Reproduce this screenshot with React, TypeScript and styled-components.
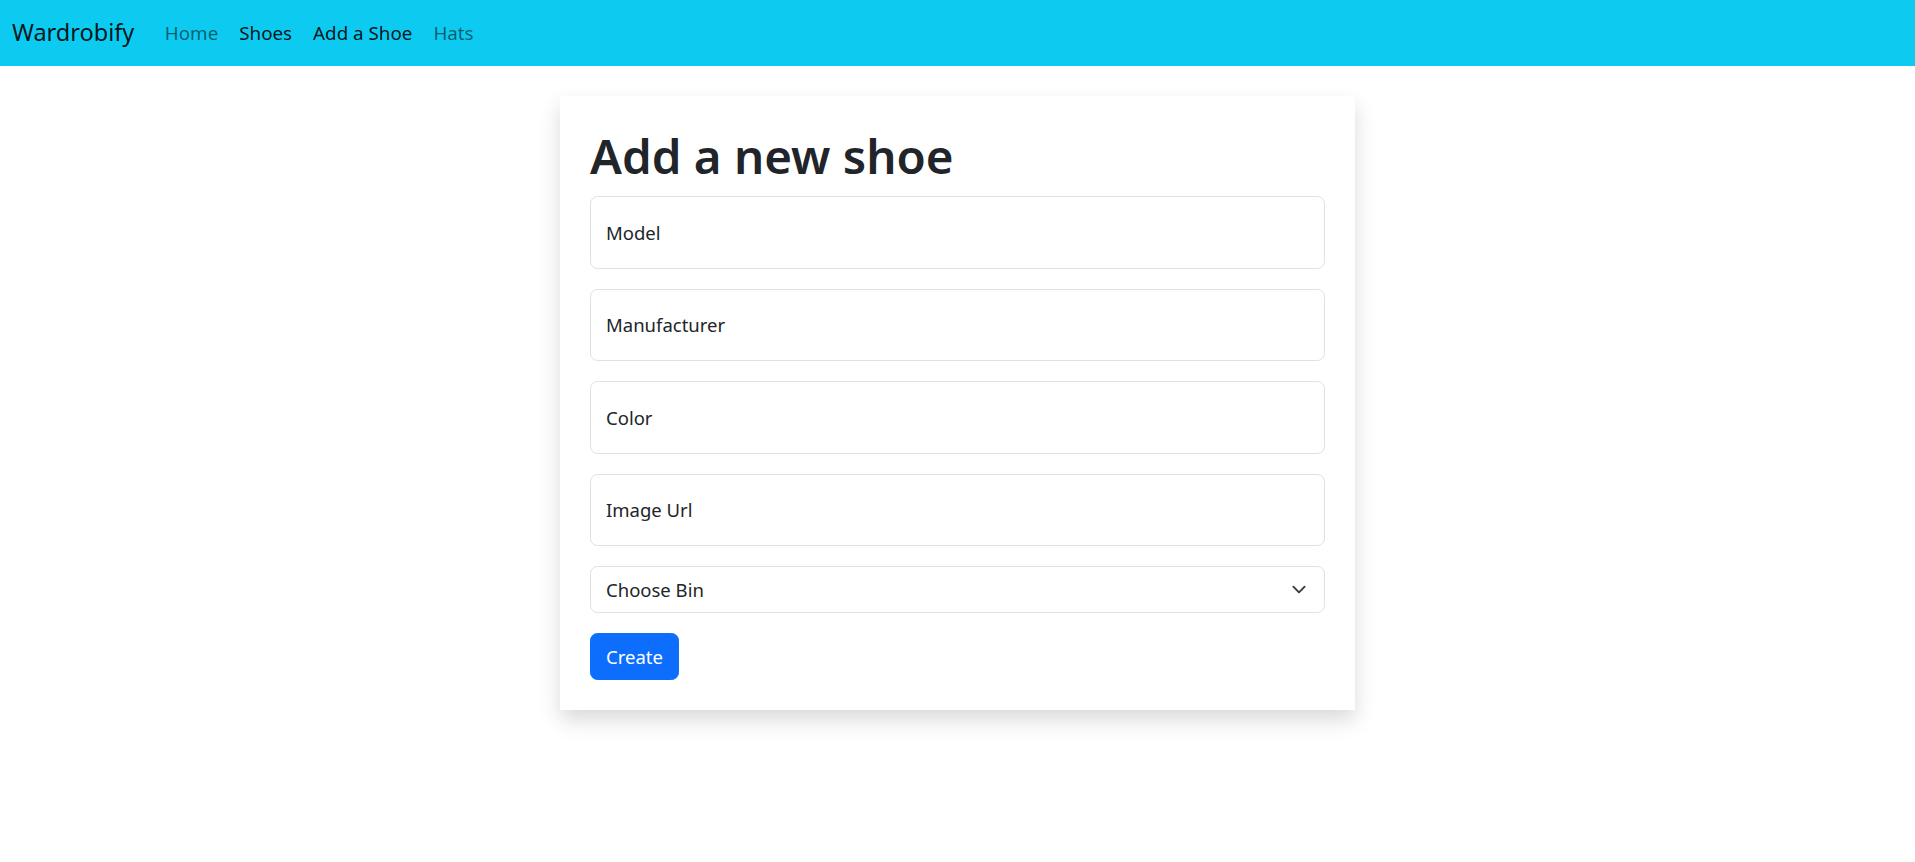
import React from "react";
import styled, { createGlobalStyle } from "styled-components";

const Global = createGlobalStyle`
  html, body { margin: 0; padding: 0; background: #fff; }
  body {
    font-family: "Noto Sans", "Open Sans", sans-serif;
    color: #212529;
    font-size: 18.5px;
  }
  * { box-sizing: border-box; }
`;

const NavBar = styled.nav`
  height: 66px;
  background: #0dcaf0;
  display: flex;
  align-items: center;
  padding: 0 12px;
`;

const Brand = styled.a`
  font-size: 23.5px;
  color: rgba(0, 0, 0, 0.9);
  text-decoration: none;
  margin-right: 20px;
  line-height: 1;
`;

const NavList = styled.ul`
  display: flex;
  list-style: none;
  margin: 0;
  padding: 0;
`;

const NavLink = styled.a<{ $active?: boolean }>`
  display: block;
  padding: 0 10.5px;
  font-size: 18.8px;
  text-decoration: none;
  color: ${(p) => (p.$active ? "rgba(0,0,0,0.9)" : "rgba(0,0,0,0.55)")};
`;

const Main = styled.main`
  display: flex;
  justify-content: center;
  padding: 30px 0 40px;
`;

const Card = styled.div`
  width: 795px;
  padding: 30px;
  background: #fff;
  box-shadow: 0 10px 20px rgba(0, 0, 0, 0.15);
`;

const Title = styled.h1`
  margin: 0 0 10px;
  font-size: 47.5px;
  font-weight: 600;
  line-height: 60px;
  color: #212529;
`;

const Form = styled.form`
  display: flex;
  flex-direction: column;
  gap: 20px;
`;

const Input = styled.input`
  width: 100%;
  height: 72.5px;
  padding: 0 15px;
  font-family: inherit;
  font-size: 18.5px;
  color: #212529;
  border: 1px solid #dee2e6;
  border-radius: 7.5px;
  background: #fff;
  outline: none;
  &::placeholder { color: #212529; opacity: 1; }
`;

const arrow = `url("data:image/svg+xml,%3csvg xmlns='http://www.w3.org/2000/svg' viewBox='0 0 16 16'%3e%3cpath fill='none' stroke='%23343a40' stroke-linecap='round' stroke-linejoin='round' stroke-width='2' d='m2 5 6 6 6-6'/%3e%3c/svg%3e")`;

const Select = styled.select`
  width: 100%;
  height: 47px;
  padding: 0 45px 0 15px;
  font-family: inherit;
  font-size: 18.5px;
  color: #212529;
  border: 1px solid #dee2e6;
  border-radius: 7.5px;
  background-color: #fff;
  background-image: ${arrow};
  background-repeat: no-repeat;
  background-position: right 15px center;
  background-size: 20px 15px;
  appearance: none;
  outline: none;
`;

const Button = styled.button`
  align-self: flex-start;
  height: 47px;
  padding: 0 15px;
  font-family: inherit;
  font-size: 18.5px;
  color: #fff;
  background: #0d6efd;
  border: 1px solid #0d6efd;
  border-radius: 7.5px;
`;

export default function App() {
  return (
    <>
      <Global />
      <NavBar>
        <Brand href="#">Wardrobify</Brand>
        <NavList>
          <li><NavLink href="#">Home</NavLink></li>
          <li><NavLink href="#" $active>Shoes</NavLink></li>
          <li><NavLink href="#" $active>Add a Shoe</NavLink></li>
          <li><NavLink href="#">Hats</NavLink></li>
        </NavList>
      </NavBar>
      <Main>
        <Card>
          <Title>Add a new shoe</Title>
          <Form onSubmit={(e) => e.preventDefault()}>
            <Input placeholder="Model" />
            <Input placeholder="Manufacturer" />
            <Input placeholder="Color" />
            <Input placeholder="Image Url" />
            <Select defaultValue="">
              <option value="">Choose Bin</option>
            </Select>
            <Button type="submit">Create</Button>
          </Form>
        </Card>
      </Main>
    </>
  );
}
